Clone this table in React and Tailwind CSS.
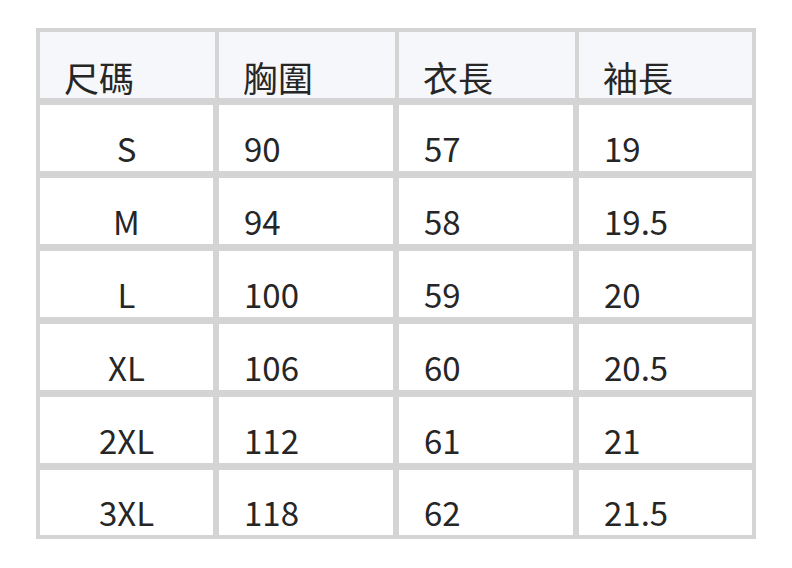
const headers = ["尺碼", "胸圍", "衣長", "袖長"];

const rows = [
  ["S", "90", "57", "19"],
  ["M", "94", "58", "19.5"],
  ["L", "100", "59", "20"],
  ["XL", "106", "60", "20.5"],
  ["2XL", "112", "61", "21"],
  ["3XL", "118", "62", "21.5"],
];

export default function App() {
  return (
    <div
      className="w-[792px] h-[568px] bg-white pt-[28px] pl-[36px] text-[#262626]"
      style={{ fontFamily: '"Noto Sans CJK TC", "Noto Sans", sans-serif' }}
    >
      <div className="w-[720px] bg-[#d4d4d4] p-[4px] flex flex-col gap-[7px]">
        {/* header */}
        <div className="grid grid-cols-[175px_176px_176px_173px] gap-[4px]">
          {headers.map((h) => (
            <div
              key={h}
              className="h-[66px] bg-[#f5f7fa] flex items-center pt-[22px] pl-[24px] text-[35px] leading-none"
            >
              {h}
            </div>
          ))}
        </div>

        {/* body */}
        {rows.map((r, i) => (
          <div
            key={r[0]}
            className={`grid grid-cols-[173px_174px_174px_173px] gap-[6px] ${
              i === rows.length - 1 ? "h-[65px]" : "h-[66px]"
            }`}
          >
            {r.map((v, j) => (
              <div
                key={j}
                className={`bg-white flex items-center pt-[20px] text-[33px] leading-none ${
                  j === 0 ? "justify-center" : "pl-[25px]"
                }`}
              >
                {v}
              </div>
            ))}
          </div>
        ))}
      </div>
    </div>
  );
}
